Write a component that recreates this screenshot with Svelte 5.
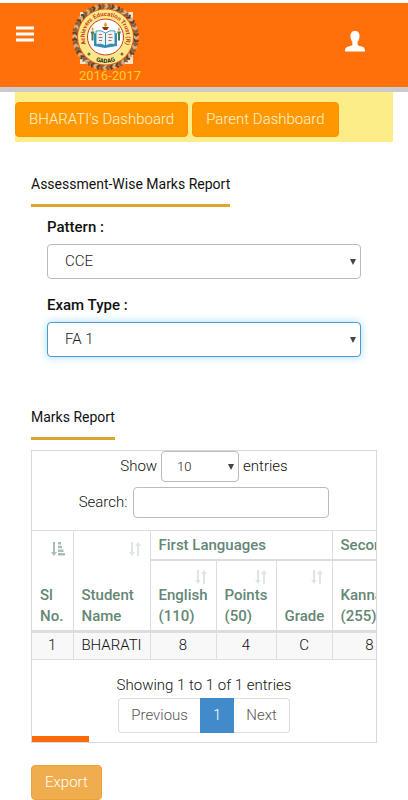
<script>
  let pattern = $state('CCE');
  let exam = $state('FA 1');
  let pageSize = $state('10');
  let query = $state('');

  const groups = [
    { title: 'First Languages', span: 3 },
    { title: 'Second', span: 1 }
  ];
  const columns = [
    { title: 'English (110)', value: '8' },
    { title: 'Points (50)', value: '4' },
    { title: 'Grade', value: 'C', short: true },
    { title: 'Kannada (255)', value: '8' }
  ];

  const spikes = Array.from({ length: 60 }, (_, i) => i * 6);
</script>

{#snippet sortIcon()}
  <svg class="sort" viewBox="0 0 14 16" aria-hidden="true">
    <path d="M3 1h2v10h2l-3 4-3-4h2zM9 15h2V5h2l-3-4-3 4h2z" />
  </svg>
{/snippet}

<header>
  <button class="menu" aria-label="Menu">
    <svg width="18" height="16" viewBox="0 0 18 16" aria-hidden="true">
      <path d="M0 0.500h18v3H0zM0 6.500h18v3H0zM0 12.500h18v3H0z" fill="#fff" />
    </svg>
  </button>
  <div class="brand">
    <svg width="71" height="70" viewBox="0 0 71 70" role="img" aria-label="Achievers Education Trust (R) Gadag">
      <defs>
        <path id="upper-arc" d="M19.400 47.500A21 21 0 1 1 51.600 47.500" />
        <path id="lower-arc" d="M13 47A26 26 0 0 0 58 47" />
      </defs>
      <path d="M10 9h53v52H10z" fill="#fbe6c8" />
      <circle cx="35.500" cy="34" r="32" fill="#a98558" />
      <g fill="none" stroke-width="1.800">
        {#each spikes as angle}
          <path
            d="M35.500 0.800l1.500 2.500-2.500 3"
            stroke={angle % 18 === 0 ? '#d4b48b' : angle % 12 === 0 ? '#5e3d2a' : '#815b3c'}
            transform="rotate({angle} 35.500 34)"
          />
        {/each}
      </g>
      <circle cx="35.500" cy="34" r="28.500" fill="#eb5a13" />
      <circle cx="35.500" cy="34" r="27.500" fill="#fbe989" />
      <circle cx="35.500" cy="34" r="18" fill="#fff" stroke="#cb3a22" />
      <text class="seal-name"><textPath href="#upper-arc" startOffset="50%" text-anchor="middle">Achievers Education Trust (R)</textPath></text>
      <text class="seal-town"><textPath href="#lower-arc" startOffset="50%" text-anchor="middle">GADAG</textPath></text>
      <circle cx="19" cy="51" r="1.500" fill="#78694b" />
      <circle cx="52" cy="51" r="1.500" fill="#78694b" />
      <path d="M24 30l11 3 12-3v13l-12 2-11-2z" fill="#328fb5" />
      <path d="M26 28q5-1.500 9.500 2v13q-4.500-3-9.500-1.500zM45 28q-5-1.500-9.500 2v13q4.500-3 9.500-1.500z" fill="#e8f4f7" stroke="#347d9e" stroke-width=".800" />
      <path d="M29 31.500h3M28.500 34.500h4M29 37.500h3M38.500 31.500h3M38.500 34.500h4M38.500 37.500h3" stroke="#d65e4f" />
      <path d="M32 24h7l-2 3h-3z" fill="#923417" />
      <path d="M35.500 19q3 4 0 5-3-1 0-5M22.500 24q2 3 0 4-2-1 0-4M49 24q2 3 0 4-2-1 0-4" fill="#f5981d" />
      <path d="M20.500 28.500h4l-1 3v6h-2v-6zM47 28.500h4l-1 3v6h-2v-6z" fill="#477d45" />
    </svg>
    <span>2016-2017</span>
  </div>
  <button class="user" aria-label="Account">
    <svg width="20" height="21" viewBox="0 0 20 21" aria-hidden="true">
      <path d="M10 0c3 0 4.700 2 4.500 5.300-.100 2.600-.700 4.300-1.900 5.700v2.900c1.400 1 4.700 1.300 6.200 2.500.9.700 1.200 2 1.200 4.100H0c0-2.100.3-3.400 1.200-4.100 1.500-1.200 4.800-1.500 6.200-2.500V11C6.200 9.600 5.600 7.900 5.500 5.300 5.300 2 7 0 10 0z" fill="#fff" />
    </svg>
  </button>
</header>

<nav>
  <a href="#student">BHARATI's Dashboard</a>
  <a href="#parent">Parent Dashboard</a>
</nav>

<main>
  <h2>Assessment-Wise Marks Report</h2>
  <form>
    <label for="pattern">Pattern :</label>
    <div class="select">
      <select id="pattern" bind:value={pattern}><option>CCE</option></select>
    </div>
    <label for="exam">Exam Type :</label>
    <div class="select">
      <select id="exam" class="active" bind:value={exam}><option>FA 1</option></select>
    </div>
  </form>

  <h2>Marks Report</h2>
  <section class="report">
    <div class="length">
      <label for="size">Show</label>
      <div class="select small">
        <select id="size" bind:value={pageSize}><option>10</option><option>25</option></select>
      </div>
      <span>entries</span>
    </div>
    <div class="search">
      <label for="search">Search:</label>
      <input id="search" type="search" bind:value={query} />
    </div>
    <div class="scroller">
      <table>
        <colgroup>
          <col class="w-serial" /><col class="w-student" /><col class="w-subject" />
          <col class="w-points" /><col class="w-grade" /><col class="w-next" />
        </colgroup>
        <thead>
          <tr>
            <th class="tall" rowspan="2">
              <svg class="sort sorted" viewBox="0 0 14 16" aria-hidden="true">
                <path d="M2 1h2v10h2l-3 4-3-4h2zM7 1h3v2.500H7zM7 4.700h4v2.500H7zM7 8.400h5.500v2.500H7zM7 12.100h7v2.500H7z" />
              </svg>
              Sl No.
            </th>
            <th class="tall" rowspan="2">{@render sortIcon()}Student Name</th>
            {#each groups as g}<th class="group" colspan={g.span}>{g.title}</th>{/each}
          </tr>
          <tr>
            {#each columns as c}
              <th class="column" class:short={c.short}>{@render sortIcon()}{c.title}</th>
            {/each}
          </tr>
        </thead>
        <tbody>
          <tr>
            <td>1</td>
            <td>BHARATI</td>
            {#each columns as c}<td>{c.value}</td>{/each}
          </tr>
        </tbody>
      </table>
    </div>
    <p>Showing 1 to 1 of 1 entries</p>
    <div class="pages">
      <button>Previous</button>
      <button class="current">1</button>
      <button>Next</button>
    </div>
    <div class="thumb"></div>
  </section>
  <button class="export">Export</button>
</main>

<style>
  :global(body) {
    margin: 0;
    background: #fff;
  }
  :global(#app) {
    font: 300 15px/21px Roboto, 'Liberation Sans', sans-serif;
    color: #111;
  }
  :global(#app) *,
  :global(#app) *::after {
    box-sizing: border-box;
  }
  button,
  input,
  select {
    font: inherit;
  }
  button {
    cursor: pointer;
  }
  header {
    display: flex;
    align-items: flex-start;
    height: 89px;
    padding: 0 43px 0 16px;
    background: #ff6f0a;
    border-bottom: 5px solid #cbcbcb;
  }
  :global(#app) {
    padding-top: 3px;
  }
  .menu,
  .user {
    padding: 0;
    border: 0;
    background: none;
    line-height: 0;
  }
  .menu {
    margin-top: 23px;
  }
  .user {
    margin: 28px 0 0 auto;
  }
  .brand {
    display: flex;
    flex-direction: column;
    align-items: flex-end;
    margin-left: 36px;
  }
  .brand svg {
    flex: none;
  }
  .brand span {
    margin-top: -8px;
    color: #ffcf2a;
    font-size: 13px;
    font-weight: 400;
  }
  .seal-name {
    font: 700 6px Roboto, sans-serif;
    fill: #cb3920;
  }
  .seal-town {
    font: 700 6px Roboto, sans-serif;
    fill: #29251c;
  }
  nav {
    display: flex;
    gap: 4px;
    margin: 0 15px;
    padding: 10px 0 5px;
    background: #fced88;
  }
  nav a,
  .export {
    height: 35px;
    padding: 6px 13px;
    border: 1px solid #fb9100;
    border-radius: 4px;
    background: #ff9800;
    color: #fff3cf;
    text-decoration: none;
    white-space: nowrap;
  }
  main {
    padding: 32px 31px 2px;
  }
  h2 {
    width: fit-content;
    margin: 0;
    padding-bottom: 9px;
    border-bottom: 3px solid #dba62c;
    font-size: 14px;
    font-weight: 400;
  }
  form {
    padding: 10px 16px 34px;
  }
  form label {
    display: block;
    margin-bottom: 6px;
    font-size: 15px;
    font-weight: 500;
  }
  .select {
    position: relative;
  }
  .select::after {
    content: '';
    position: absolute;
    right: 5px;
    top: 50%;
    margin-top: -3px;
    border: 3px solid transparent;
    border-top: 6px solid #444;
    border-bottom: 0;
    pointer-events: none;
  }
  select,
  input {
    display: block;
    width: 100%;
    height: 35px;
    padding: 0 17px;
    border: 1px solid #bbb;
    border-radius: 4px;
    background: #fff;
    color: #222;
    font-size: 15px;
    appearance: none;
  }
  form .select {
    margin-bottom: 16px;
  }
  select.active {
    border-color: #4b9ccc;
    box-shadow: 0 0 8px #a6d9f5;
  }
  .report {
    margin: 10px 0 22px;
    border: 1px solid #d9d9d9;
  }
  .length,
  .search {
    display: flex;
    justify-content: center;
    align-items: center;
    gap: 4px;
  }
  .small {
    width: 78px;
  }
  .small select {
    height: 31px;
    padding: 0 15px;
    font-size: 13px;
  }
  .search {
    gap: 6px;
    margin: 5px 0 12px;
  }
  .search input {
    width: 196px;
    height: 31px;
    padding: 0 8px;
  }
  .scroller {
    overflow-x: auto;
    scrollbar-width: none;
  }
  table {
    width: 375px;
    table-layout: fixed;
    border-collapse: collapse;
  }
  .w-serial {
    width: 41px;
  }
  .w-student {
    width: 77px;
  }
  .w-subject {
    width: 66px;
  }
  .w-points {
    width: 60px;
  }
  .w-grade {
    width: 56px;
  }
  .w-next {
    width: 75px;
  }
  th,
  td {
    border: 1px solid #ddd;
  }
  th {
    padding: 4px 8px 3px;
    color: #648776;
    font-weight: 500;
    text-align: left;
    vertical-align: bottom;
  }
  th:first-child,
  td:first-child {
    border-left: 0;
  }
  .column:first-child {
    border-left: 1px solid #ddd;
  }
  .column,
  .tall {
    border-bottom: 3px solid #ddd;
  }
  .group {
    height: 28px;
    border-bottom-width: 2px;
  }
  .column {
    height: 71px;
  }
  .sort {
    display: block;
    width: 14px;
    height: 16px;
    margin: 0 0 0 auto;
    fill: #dfe5e2;
  }
  .tall .sort {
    margin-bottom: 28px;
  }
  .short .sort {
    margin-bottom: 21px;
  }
  .sorted {
    fill: #a9bdb2;
  }
  td {
    height: 28px;
    padding: 0;
    background: #f8f8f8;
    text-align: center;
  }
  p {
    margin: 15px 0 2px;
    text-align: center;
  }
  .pages {
    display: flex;
    justify-content: center;
  }
  .pages button {
    height: 35px;
    padding: 0 12px;
    border: 1px solid #ddd;
    background: #fff;
    color: #555;
  }
  .pages button:first-child {
    border-right: 0;
    border-radius: 4px 0 0 4px;
  }
  .pages button:last-child {
    border-left: 0;
    border-radius: 0 4px 4px 0;
  }
  .pages .current {
    border-color: #428bca;
    background: #428bca;
    color: #fff;
  }
  .thumb {
    width: 57px;
    height: 6px;
    margin-top: 3px;
    background: #f96c08;
  }
  .export {
    display: block;
    border-color: #eea236;
    background: #f0ad4e;
    color: #fff;
  }
</style>
